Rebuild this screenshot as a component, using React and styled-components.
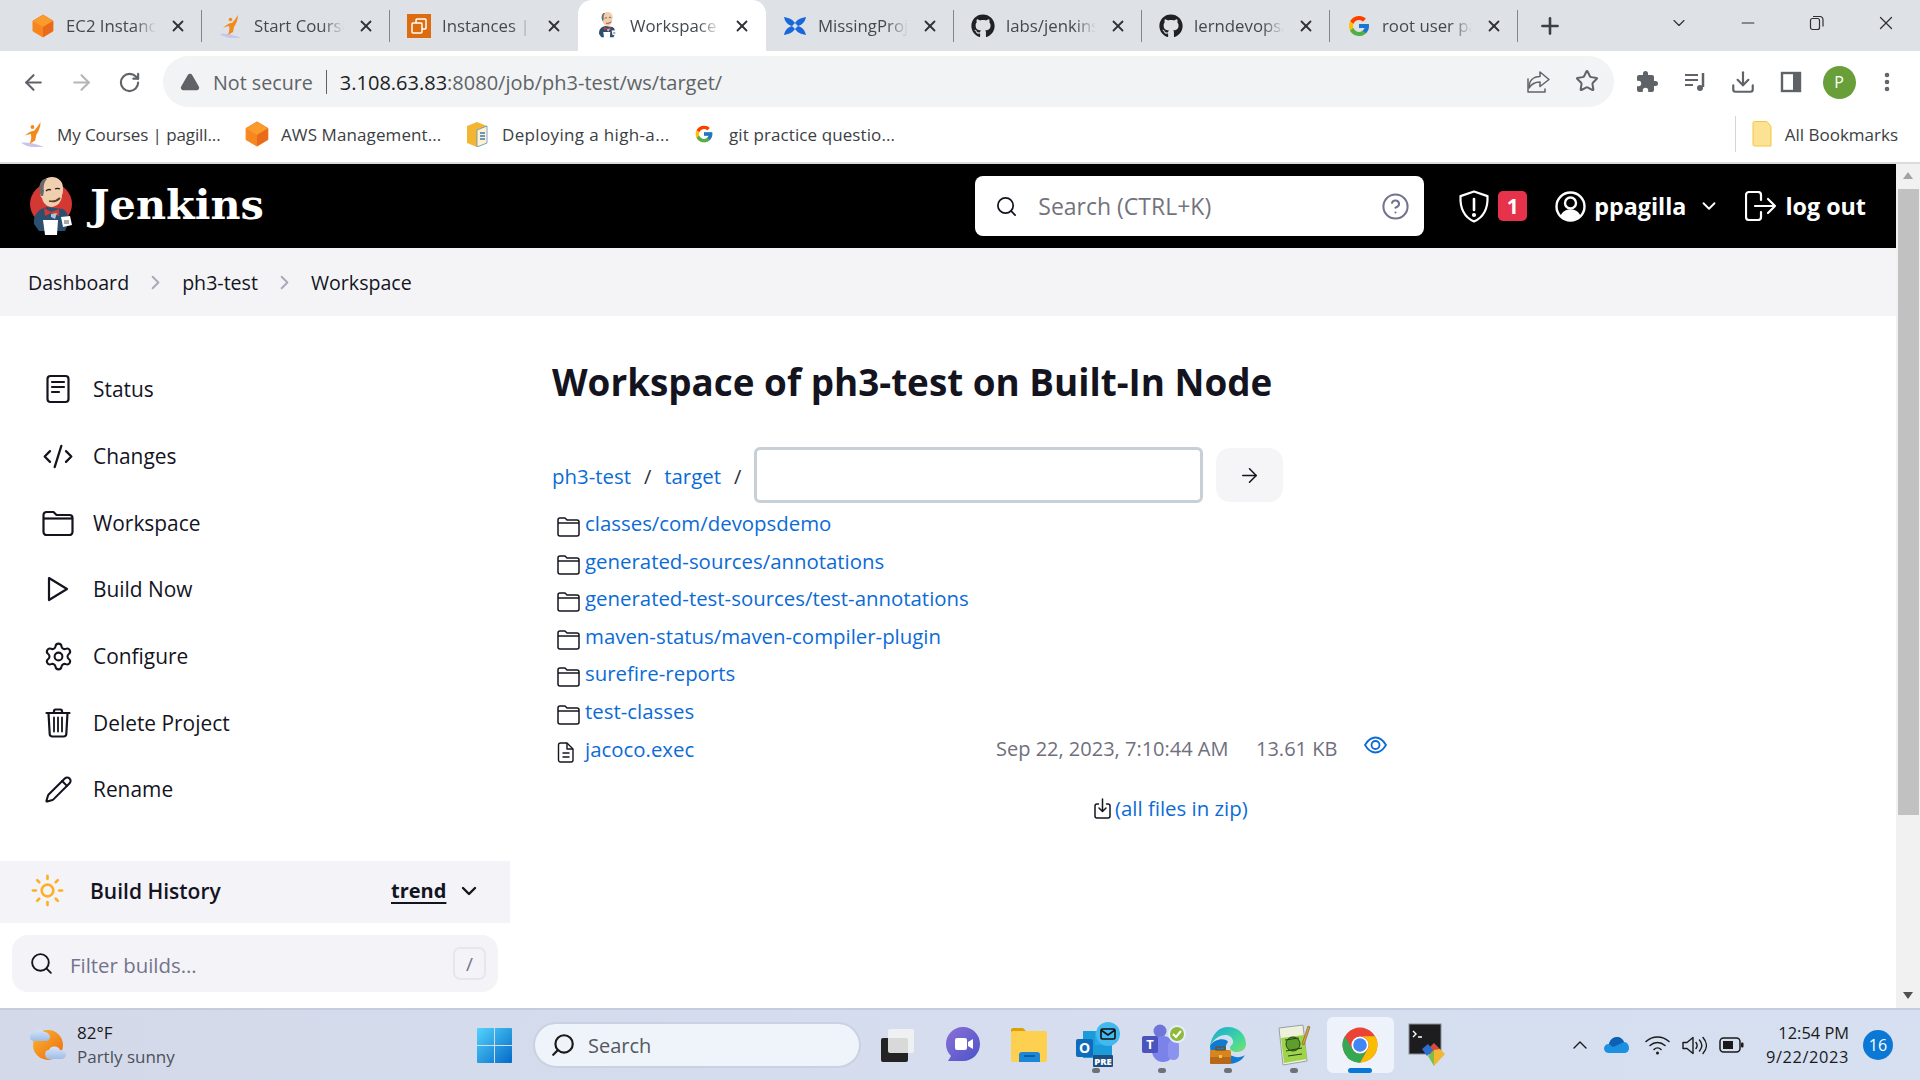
import React from 'react';
import styled, { createGlobalStyle } from 'styled-components';
import { FaGithub } from 'react-icons/fa';
import { FcGoogle } from 'react-icons/fc';
import {
  ArrowLeft, ArrowRight, RotateCw, Star, Download, MoreVertical, ChevronDown, ChevronUp, Plus, X, Minus,
  Search, ChevronRight, CodeXml, Settings, Pencil, Sun, CircleHelp, TriangleAlert
} from 'lucide-react';

const sans = '"Open Sans", "Noto Sans", sans-serif';

const Global = createGlobalStyle`
  html, body { margin: 0; padding: 0; width: 1920px; height: 1080px; overflow: hidden; background: #fff; }
  * { box-sizing: border-box; }
  body { font-family: ${sans}; }
`;

const Screen = styled.div`
  width: 1920px; height: 1080px; display: flex; flex-direction: column; overflow: hidden; background: #fff;
`;
const TabStrip = styled.div`
  height: 51px; flex: none; display: flex; background: #dee1e6; padding-left: 14px; align-items: stretch;
`;
const Tab = styled.div`
  width: 188px; flex: none; display: flex; align-items: center; padding-left: 17px; position: relative;
  background: ${p => (p.$active ? '#fff' : 'transparent')};
  border-radius: ${p => (p.$active ? '14px 14px 0 0' : '0')};
  &::after {
    content: ''; position: absolute; right: 0; top: 10px; height: 32px; width: 1px;
    background: ${p => (p.$sep ? '#80868b' : 'transparent')};
  }
`;
const Fav = styled.span`
  width: 24px; height: 24px; flex: none; display: flex; align-items: center; justify-content: center; color: #202124;
`;
const TabTitle = styled.span`
  width: 90px; margin-left: 11px; font-size: 16.8px; color: #45494e; white-space: nowrap; overflow: hidden;
  -webkit-mask-image: linear-gradient(90deg, #000 76%, transparent 100%);
  mask-image: linear-gradient(90deg, #000 76%, transparent 100%);
`;
const TabClose = styled.span`
  display: flex; margin-left: 13px; color: #303134;
`;
const NewTab = styled.span`
  display: flex; align-items: center; margin-left: 19px; color: #3c4043;
`;
const WinControls = styled.div`
  margin-left: auto; display: flex; align-items: flex-start; padding-top: 13px;
`;
const WinButton = styled.span`
  width: 69px; height: 20px; display: flex; align-items: center; justify-content: center; color: #303134;
`;

const Toolbar = styled.div`
  height: 62px; flex: none; display: flex; align-items: center; background: #fff; padding-left: 9px;
`;
const NavButton = styled.span`
  width: 48px; display: flex; justify-content: center; color: ${p => (p.$off ? '#b4b6b9' : '#5f6368')};
`;
const Omnibox = styled.div`
  margin-left: 10px; width: 1451px; height: 51px; border-radius: 26px; background: #f1f3f4; display: flex; align-items: center; padding-left: 17px;
  margin-top: -1px;
`;
const Insecure = styled.span`
  margin: 2px 0 0 13px; font-size: 19.7px; color: #5f6368;
`;
const UrlDivider = styled.span`
  width: 1px; height: 24px; background: #5f6368; margin: 0 13px 0 13px;
`;
const UrlHost = styled.span`
  margin-top: 2px; font-size: 20px; color: #202124;
`;
const UrlPath = styled.span`
  margin-top: 2px; font-size: 20px; color: #5f6368;
`;
const OmniEnd = styled.div`
  margin-left: auto; display: flex; padding-right: 15px; gap: 24px; color: #5f6368;
`;
const ToolIcons = styled.div`
  display: flex; margin-left: 9px; color: #5f6368;
`;
const ToolIcon = styled.span`
  width: 48px; display: flex; justify-content: center; align-items: center;
`;
const Avatar = styled.span`
  width: 33px; height: 33px; border-radius: 50%; background: #689f38; color: #fff; font-size: 16px; display: flex; align-items: center; justify-content: center;
`;

const Bookmarks = styled.div`
  height: 51px; flex: none; display: flex; align-items: center; background: #fff; border-bottom: 2px solid #dcdcdc; padding-bottom: 7px;
`;
const Bookmark = styled.div`
  display: flex; align-items: center; width: ${p => p.$w}px; flex: none; padding-left: ${p => p.$pl || 0}px;
  font-size: 17px; color: #3c4043; white-space: nowrap;
`;
const BookmarkLabel = styled.span`
  margin-left: ${p => p.$ml || 13}px;
  letter-spacing: ${p => p.$ls || 0}px;
`;
const AllBookmarks = styled.div`
  margin-left: auto; display: flex; align-items: center; padding-right: 22px; height: 36px; font-size: 17px; color: #3c4043;
  border-left: 1px solid #d5d5d5; padding-left: 16px;
`;

const Viewport = styled.div`
  flex: 1; min-height: 0; display: flex;
`;
const Page = styled.div`
  flex: 1; min-width: 0; display: flex; flex-direction: column;
`;
const ScrollBar = styled.div`
  width: 24px; flex: none; background: #f1f1f1; display: flex; flex-direction: column; align-items: center; padding-top: 8px; color: #a3a3a3;
`;
const ScrollArrow = styled.span`
  width: 0; height: 0; border-left: 5px solid transparent; border-right: 5px solid transparent;
  border-${p => (p.$down ? 'top' : 'bottom')}: 7px solid ${p => (p.$down ? '#505050' : '#a3a3a3')};
  ${p => (p.$down ? 'margin-top: 177px;' : '')}
`;
const ScrollThumb = styled.span`
  width: 21px; height: 626px; background: #c1c1c1; margin-top: 10px; flex: none;
`;

const Header = styled.header`
  height: 84px; flex: none; background: #000; display: flex; align-items: center; padding: 0 30px 0 29px; color: #fff;
`;
const Brand = styled.span`
  font-family: "DejaVu Serif", "Liberation Serif", serif; font-weight: 700; font-size: 41.4px; margin-left: 17px; line-height: 1; margin-top: -3px;
`;
const HeaderSearch = styled.div`
  margin-left: auto; width: 449px; height: 60px; background: #fff; border-radius: 8px; display: flex; align-items: center; padding: 0 14px 0 20px; color: #6d6d78; flex: none;
`;
const HeaderPlaceholder = styled.span`
  margin-left: 20px; font-size: 23px; color: #73737c; flex: 1;
`;
const Shield = styled.span`
  margin-left: 34px; display: flex;
`;
const Badge = styled.span`
  margin-left: 8px; width: 29px; height: 30px; border-radius: 5px; background: #e6324b; color: #fff; font-size: 21px; font-weight: 700; display: flex; align-items: center; justify-content: center;
`;
const UserIcon = styled.span`
  margin-left: 28px; display: flex;
`;
const HeaderLabel = styled.span`
  margin-left: ${p => p.$ml}px; font-size: 23.3px; font-weight: 700; color: #fff; white-space: nowrap;
`;
const HeaderIcon = styled.span`
  margin-left: ${p => p.$ml}px; display: flex;
`;

const Crumbs = styled.nav`
  height: 68px; flex: none; background: #f4f4f6; display: flex; align-items: center; padding-left: 28px; color: #14141f; font-size: 19.6px;
`;
const CrumbSep = styled.span`
  display: flex; margin: 0 15px 0 15px; color: #a8a8bb;
`;

const Body = styled.div`
  flex: 1; min-height: 0; display: flex;
`;
const Sidebar = styled.aside`
  width: 510px; flex: none; padding-top: 40px; display: flex; flex-direction: column;
`;
const Task = styled.div`
  height: 66.7px; flex: none; display: flex; align-items: center; padding-left: 42px; font-size: 20.9px; color: #14141f;
`;
const TaskIcon = styled.span`
  width: 32px; height: 32px; display: flex; align-items: center; justify-content: center; margin-right: 19px; color: #14141f;
`;
const History = styled.div`
  margin-top: 38.2px; height: 62px; flex: none; background: #f3f3f8; display: flex; align-items: center; padding: 0 0 3px 30px; color: #14141f;
`;
const HistoryTitle = styled.span`
  margin-left: 25px; font-size: 21px; font-weight: 600; width: 301px;
`;
const Trend = styled.span`
  font-size: 20px; font-weight: 700; text-decoration: underline; text-underline-offset: 4px;
`;
const TrendChevron = styled.span`
  display: flex; margin-left: 11px;
`;
const Filter = styled.div`
  margin: 12px 12px 0; height: 57px; flex: none; background: #f3f3f8; border-radius: 16px; display: flex; align-items: center; padding: 0 12px 0 17px; color: #14141f;
`;
const FilterText = styled.span`
  margin-left: 16px; flex: 1; font-size: 20.4px; font-weight: 500; color: #73738c; padding-top: 2px;
`;
const KeyCap = styled.span`
  width: 33px; height: 33px; border: 2px solid #e6e6ef; border-radius: 7px; display: flex; align-items: center; justify-content: center; color: #73738c; font-size: 19px;
`;

const Content = styled.main`
  flex: 1; min-width: 0; padding: 41px 0 0 42px;
`;
const Title = styled.h1`
  margin: 0; font-size: 36.85px; line-height: 50px; font-weight: 700; color: #14141f; white-space: nowrap;
`;
const PathRow = styled.div`
  margin-top: 40px; height: 56px; display: flex; align-items: center; font-size: 20px; color: #14141f;
`;
const Link = styled.a`
  color: #0b6bd6; font-size: 20.4px; white-space: nowrap; font-weight: 500;
`;
const PathLink = styled(Link)`
  margin-top: 2px;
`;
const Slash = styled.span`
  margin: 2px 13px 0; color: #30303a;
`;
const PathInput = styled.div`
  width: 449px; height: 56px; border: 3px solid #c7d0d6; border-radius: 6px; background: #fff; flex: none;
`;
const GoButton = styled.span`
  width: 67px; height: 54px; margin-left: 13px; border-radius: 14px; background: #f5f5f7; display: flex; align-items: center; justify-content: center; color: #14141f;
`;
const FileList = styled.div`
  margin-top: 1.5px; display: flex; flex-direction: column;
`;
const FileRow = styled.div`
  height: 37.55px; display: flex; align-items: center; white-space: nowrap;
`;
const FileIcon = styled.span`
  width: 33px; flex: none; display: flex; padding-left: 5px; margin-top: 8px; color: #14141f;
`;
const FileName = styled.span`
  width: 411px; flex: none; display: flex;
`;
const Meta = styled.span`
  width: ${p => p.$w}px; flex: none; font-size: 20px; color: #6f6f7e;
`;
const EyeBox = styled.span`
  display: flex; margin-top: -8px; color: #0b6bd6;
`;
const ZipRow = styled.div`
  margin: 21px 0 0 542px; height: 40px; display: flex; align-items: center; color: #14141f;
`;
const ZipIcon = styled.span`
  display: flex; margin-right: 4px;
`;

const Taskbar = styled.footer`
  height: 72px; flex: none; display: flex; align-items: center; position: relative;
  background: linear-gradient(90deg, #d3d9e9 0%, #d5ddee 50%, #d6e0f1 100%); border-top: 2px solid #c5cce0;
`;
const Weather = styled.div`
  width: 477px; flex: none; display: flex; align-items: center; padding-left: 29px;
`;
const WeatherText = styled.div`
  margin-left: 10px; display: flex; flex-direction: column; line-height: 24px;
`;
const WeatherTemp = styled.span`
  font-size: 17px; color: #1a1a1a;
`;
const WeatherDesc = styled.span`
  font-size: 17px; color: #4d5058;
`;
const WinLogo = styled.span`
  width: 35px; flex: none; display: flex;
`;
const TaskSearch = styled.div`
  margin-left: 21px; width: 328px; height: 46px; border-radius: 23px; background: #eff3fa; border: 2px solid #c9d2e4; display: flex; align-items: center; padding-left: 15px; font-size: 20px; color: #55585f; flex: none;
`;
const MirroredIcon = styled.span`
  display: flex; transform: scaleX(-1);
`;
const TaskSearchLabel = styled.span`
  margin-left: 12px;
`;
const Tiles = styled.div`
  margin-left: 3px; display: flex; align-items: center;
`;
const Tile = styled.span`
  width: 66.2px; height: 56px; display: flex; align-items: center; justify-content: center; position: relative; flex: none; border-radius: 6px;
  background: ${p => (p.$on ? '#eef2fa' : 'transparent')};
  &::after {
    content: ''; position: absolute; left: 50%; bottom: 0; height: 5px; border-radius: 3px; transform: translateX(-50%);
    width: ${p => (p.$on ? '24px' : p.$dot ? '8px' : '0')};
    background: ${p => (p.$on ? '#0a78d4' : '#6f7179')};
  }
`;
const Tray = styled.div`
  margin-left: auto; display: flex; align-items: center; color: #1a1a1a; padding-right: 27px;
`;
const TrayIcon = styled.span`
  display: flex; margin-left: ${p => p.$ml}px;
`;
const Clock = styled.div`
  margin-left: 22px; display: flex; flex-direction: column; align-items: flex-end; font-size: 16.4px; line-height: 24px; color: #1a1a1a;
`;
const ClockDate = styled.span`
  letter-spacing: .6px;
`;
const Count = styled.span`
  margin-left: 14px; width: 30px; height: 30px; border-radius: 50%; background: #0a78d4; color: #fff; font-size: 16px; display: flex; align-items: center; justify-content: center;
`;

const AwsCube = ({ s = 24 }) => (
  <svg width={s} height={s} viewBox="0 0 24 24">
    <path d="M12 1l10 6v10l-10 6L2 17V7z" fill="#f7861f" stroke="#f7861f" strokeWidth="1" strokeLinejoin="round" />
    <path d="M12 1l10 6-10 6L2 7z" fill="#fb9b2c" />
    <path d="M12 13l10-6v10l-10 6z" fill="#e9691d" />
  </svg>
);
const Runner = ({ s = 24 }) => (
  <svg width={s} height={s} viewBox="0 0 24 24">
    <path d="M1 20c6-1 14 1 21 4-8 1-16 0-21-4z" fill="#c6c6e8" />
    <path d="M19 1c0 5-2 9-4 12l-1 5-5 3c1-3 2-6 1-9-2 0-4 1-6 2 3-3 6-5 9-5 2-2 4-5 6-8z" fill="#f28a1e" />
    <circle cx="11.500" cy="5.500" r="1.800" fill="#f28a1e" />
  </svg>
);
const Ec2 = () => (
  <svg width="24" height="24" viewBox="0 0 24 24">
    <rect width="24" height="24" fill="#dd6b10" />
    <rect x="9" y="5" width="10" height="10" rx="1" fill="none" stroke="#fff" strokeWidth="1.500" />
    <rect x="5" y="9" width="10" height="10" rx="1" fill="#dd6b10" stroke="#fff" strokeWidth="1.500" />
  </svg>
);
const Atlassian = () => (
  <svg width="26" height="26" viewBox="0 0 24 24">
    <path d="M1 3c6 1 9 3 11 6 2-3 5-5 11-6-1 5-4 8-8 9 4 1 7 4 8 9-6-1-9-3-11-6-2 3-5 5-11 6 1-5 4-8 8-9-4-1-7-4-8-9z" fill="#1868db" />
    <path d="M12 9c-1 1-2 2-3 3 1 1 2 2 3 3 1-1 2-2 3-3-1-1-2-2-3-3z" fill="#dee1e6" />
  </svg>
);
const JenkinsLogo = ({ w = 44, h = 58, plain }) => (
  <svg width={w} height={h} viewBox="0 0 44 58">
    {!plain && <circle cx="22" cy="27" r="21" fill="#d33833" />}
    <path d="M5 47c-1-9 4-15 13-17l16 2c5 3 6 9 5 15l-3 7H10z" fill="#2b4f6e" />
    <path d="M12 13C11 5 16 0 23 0c6 0 11 4 11 11 0 3 0 5-1 7 0 7-5 12-11 12-5-1-8-4-9-9-2-1-2-6-1-8z" fill="#f0cfae" />
    <path d="M12 19c-3-7-2-14 3-17 1 0 2 0 3 0-3 3-4 8-3 12l-1 5z" fill="#6b6a68" />
    <path d="M17 14c2-2 3-2 5-1M26 12c2-1 3-1 5 0" stroke="#231f20" strokeWidth="1.300" fill="none" />
    <path d="M20 24c4 1 8 0 11-3" stroke="#5d3b26" strokeWidth="1.800" fill="none" />
    <path d="M15 31l7 4 8-3v7l-8-3-6 3z" fill="#d33833" />
    <path d="M22 37l6-1-2 6-4-2z" fill="#a9c5dc" />
    <path d="M14 43h15l-1 15H16z" fill="#fff" />
    <path d="M32 40l9-1 2 9-9 2z" fill="#fff" />
    <path d="M35 44h5M35 46h5" stroke="#555" />
  </svg>
);
const ShieldIcon = () => (
  <svg width="32" height="33" viewBox="0 0 32 33" fill="none" stroke="#fff" strokeWidth="2.200" strokeLinejoin="round">
    <path d="M16 1.500l13.500 4.600c.5 11.500-2.500 20.500-13.500 25.400C5 26.600 2 17.600 2.500 6.100z" />
    <path d="M16 9v11" strokeLinecap="round" strokeWidth="2.600" />
    <circle cx="16" cy="25" r="1" fill="#fff" />
  </svg>
);
const UserCircle = () => (
  <svg width="31" height="33" viewBox="0 0 31 33" fill="none">
    <circle cx="15.500" cy="16.500" r="14" stroke="#fff" strokeWidth="2.400" />
    <circle cx="15.500" cy="13" r="5.500" stroke="#fff" strokeWidth="2.400" />
    <path d="M5.500 26c2-5 5.500-6.500 10-6.500s8 1.500 10 6.500c-3 3-6 4.500-10 4.500S8.500 29 5.500 26z" fill="#fff" />
  </svg>
);
const LogoutIcon = () => (
  <svg width="32" height="30" viewBox="0 0 32 30" fill="none" stroke="#fff" strokeWidth="2.200" strokeLinecap="round" strokeLinejoin="round">
    <path d="M16 9V4a3 3 0 0 0-3-3H4a3 3 0 0 0-3 3v22a3 3 0 0 0 3 3h9a3 3 0 0 0 3-3v-5" />
    <path d="M10 15h20M23 8l7 7-7 7" />
  </svg>
);
const StatusIcon = () => (
  <svg width="24" height="30" viewBox="0 0 24 30" fill="none" stroke="currentColor" strokeWidth="2.200" strokeLinecap="round">
    <rect x="1.500" y="2" width="21" height="26" rx="3" />
    <path d="M6 8h12M6 13h12M6 18h7" />
  </svg>
);
const FolderSide = () => (
  <svg width="32" height="26" viewBox="0 0 32 26" fill="none" stroke="currentColor" strokeWidth="2.200" strokeLinejoin="round">
    <path d="M1.500 5a3 3 0 0 1 3-3h7l3 3h13a3 3 0 0 1 3 3v14a3 3 0 0 1-3 3h-23a3 3 0 0 1-3-3z" />
    <path d="M1.500 8.500h29" />
  </svg>
);
const PlayIcon = () => (
  <svg width="22" height="26" viewBox="0 0 22 26" fill="none" stroke="currentColor" strokeWidth="2.200" strokeLinejoin="round">
    <path d="M2 2l18 11L2 24z" />
  </svg>
);
const TrashIcon = () => (
  <svg width="26" height="30" viewBox="0 0 26 30" fill="none" stroke="currentColor" strokeWidth="2.200" strokeLinecap="round" strokeLinejoin="round">
    <path d="M1.500 5h23M9 5V3a1.500 1.500 0 0 1 1.500-1.500h5A1.500 1.500 0 0 1 17 3v2" />
    <path d="M3.500 5l1.200 21a2.500 2.500 0 0 0 2.500 2.500h11.600a2.500 2.500 0 0 0 2.500-2.500L22.500 5" />
    <path d="M9 9.500v14M13 9.500v14M17 9.500v14" strokeWidth="1.800" />
  </svg>
);
const FolderSmall = () => (
  <svg width="23" height="20" viewBox="0 0 23 20" fill="none" stroke="currentColor" strokeWidth="1.500" strokeLinejoin="round">
    <path d="M1 3a2 2 0 0 1 2-2h5l2 2h10a2 2 0 0 1 2 2v12a2 2 0 0 1-2 2H3a2 2 0 0 1-2-2z" />
    <path d="M1 6h21" />
  </svg>
);
const FileSmall = () => (
  <svg width="18" height="21" viewBox="0 0 18 21" fill="none" stroke="currentColor" strokeWidth="1.400" strokeLinejoin="round">
    <path d="M3.500 1H10l6 6v11a2 2 0 0 1-2 2H3.500a2 2 0 0 1-2-2V3a2 2 0 0 1 2-2z" />
    <path d="M10 1v6h6M5.500 11h7M5.500 15h7" />
  </svg>
);
const ZipDown = () => (
  <svg width="17" height="21" viewBox="0 0 17 21" fill="none" stroke="currentColor" strokeWidth="1.500" strokeLinejoin="round" strokeLinecap="round">
    <path d="M4.500 6H3a2 2 0 0 0-2 2v10a2 2 0 0 0 2 2h11a2 2 0 0 0 2-2V8a2 2 0 0 0-2-2h-1.500" />
    <path d="M8.500 1v12M5 10l3.500 3.500L12 10" />
  </svg>
);
const EyeIcon = () => (
  <svg width="23" height="18" viewBox="0 0 23 18" fill="none" stroke="currentColor" strokeWidth="1.800">
    <path d="M1 9c3-5 6.500-7.500 10.500-7.500S19 4 22 9c-3 5-6.500 7.500-10.500 7.500S4 14 1 9z" />
    <circle cx="11.500" cy="9" r="4" />
  </svg>
);
const ShareIcon = () => (
  <svg width="25" height="25" viewBox="0 0 25 25" fill="none" stroke="currentColor" strokeWidth="1.500" strokeLinejoin="round" strokeLinecap="round">
    <path d="M14 3l9 7.500-9 7V13c-5 0-8.500 2-11 6 0-7 4-11.500 11-11.500z" />
    <path d="M2 10v13h17v-3" />
  </svg>
);
const WinIcon = ({ s = 35 }) => (
  <svg width={s} height={s} viewBox="0 0 35 35">
    <defs>
      <linearGradient id="wg" x1="0" y1="0" x2="1" y2="1">
        <stop offset="0" stopColor="#52d4fb" />
        <stop offset="1" stopColor="#0569c8" />
      </linearGradient>
    </defs>
    <path d="M0 1a1 1 0 0 1 1-1h16v17H0zM18 0h16a1 1 0 0 1 1 1v16H18zM0 18h17v17H1a1 1 0 0 1-1-1zM18 18h17v16a1 1 0 0 1-1 1H18z" fill="url(#wg)" />
  </svg>
);
const TaskView = () => (
  <svg width="36" height="36" viewBox="0 0 36 36">
    <rect x="2" y="11" width="27" height="24" rx="2" fill="#232323" />
    <rect x="9" y="2" width="26" height="24" rx="2" fill="#f2f2f2" fillOpacity=".88" />
  </svg>
);
const MeetChat = () => (
  <svg width="36" height="38" viewBox="0 0 36 38">
    <defs>
      <linearGradient id="mc" x1="0" y1="0" x2="1" y2="1">
        <stop offset="0" stopColor="#8c6fd8" />
        <stop offset="1" stopColor="#4a54c8" />
      </linearGradient>
    </defs>
    <path d="M18 1c10 0 17 8 17 17s-7 17-17 17H3l3-5C3 27 1 23 1 18 1 9 8 1 18 1z" fill="url(#mc)" />
    <rect x="10" y="12" width="12" height="12" rx="2" fill="#fff" />
    <path d="M23 16l5-3v10l-5-3z" fill="#fff" />
  </svg>
);
const FolderApp = () => (
  <svg width="38" height="36" viewBox="0 0 38 36">
    <path d="M1 3a2 2 0 0 1 2-2h10l4 4h-16z" fill="#e0a100" />
    <rect x="1" y="4" width="36" height="31" rx="2" fill="#fdd04f" />
    <path d="M9 35v-7a3 3 0 0 1 3-3h15a3 3 0 0 1 3 3v7z" fill="#1b87d6" />
    <rect x="14" y="28" width="11" height="2" fill="#0f5da3" />
  </svg>
);
const OutlookApp = () => (
  <svg width="49" height="46" viewBox="0 0 49 46">
    <path d="M12 9h29v27H12z" fill="#1b9bd8" />
    <path d="M24 9h17v14H24z" fill="#28a8ea" />
    <rect x="5" y="17" width="17" height="18" rx="2" fill="#0f6cbd" />
    <text x="13.500" y="31" fontSize="14" fontWeight="700" textAnchor="middle" fill="#fff" fontFamily="Open Sans">O</text>
    <rect x="22" y="33" width="20" height="12" rx="1" fill="#1f4f80" />
    <text x="32" y="43" fontSize="9.500" fontWeight="800" textAnchor="middle" fill="#fff" fontFamily="Open Sans">PRE</text>
    <circle cx="37" cy="12" r="12" fill="#43b9ef" />
    <rect x="30" y="7" width="14" height="10" rx="1.500" fill="none" stroke="#111" strokeWidth="1.600" />
    <path d="M30 8l7 5 7-5" fill="none" stroke="#111" strokeWidth="1.600" />
  </svg>
);
const TeamsApp = () => (
  <svg width="48" height="46" viewBox="0 0 48 46">
    <circle cx="22" cy="9" r="6.500" fill="#6f76d8" />
    <rect x="14" y="14" width="22" height="26" rx="11" fill="#7b83eb" />
    <rect x="30" y="18" width="11" height="20" rx="5.500" fill="#8c93ee" />
    <rect x="4" y="14" width="16" height="17" rx="2" fill="#4b53bc" />
    <text x="12" y="27" fontSize="13" fontWeight="700" textAnchor="middle" fill="#fff" fontFamily="Open Sans">T</text>
    <circle cx="39" cy="12" r="8" fill="#8fb93b" stroke="#e9eef8" strokeWidth="2" />
    <path d="M35 12l3 3 5-6" fill="none" stroke="#fff" strokeWidth="2" />
  </svg>
);
const EdgeApp = () => (
  <svg width="38" height="38" viewBox="0 0 38 38">
    <defs>
      <linearGradient id="eg" x1="0" y1="0" x2="1" y2="1">
        <stop offset="0" stopColor="#1aa6d8" />
        <stop offset=".6" stopColor="#3ed6a0" />
        <stop offset="1" stopColor="#78e06a" />
      </linearGradient>
    </defs>
    <path d="M19 1c11 0 18 8 18 17 0 5-4 8-9 8-4 0-7-2-7-4 0-3 4-3 3-7-1-5-5-6-8-6-6 0-11 4-15 11C3 8 10 1 19 1z" fill="url(#eg)" />
    <path d="M1 20c3-7 16-9 18-4-3 3-3 9 1 12 5 4 12 4 16 1-3 6-10 9-17 9C9 38 1 31 1 20z" fill="#0f7bd3" />
    <rect x="1" y="24" width="21" height="14" rx="1.500" fill="#d8841f" />
    <rect x="1" y="31" width="21" height="7" rx="1.500" fill="#b8681a" />
    <rect x="7" y="21" width="9" height="3" fill="none" stroke="#7a4a14" strokeWidth="1.200" />
    <rect x="10" y="29" width="3" height="3" fill="#f5c542" />
  </svg>
);
const NotepadApp = () => (
  <svg width="36" height="42" viewBox="0 0 36 42">
    <path d="M3 4l24-3 4 36-24 4z" fill="#eef2dc" stroke="#9aa0a6" />
    <path d="M5 14l23-3 3 24-23 4z" fill="#9fd34a" />
    <circle cx="17" cy="20" r="7" fill="#5d9e2e" stroke="#24421a" />
    <path d="M10 27l16-3M9 16l14-2M12 32l14-2" stroke="#24421a" />
    <path d="M34 3l-6 18-2-1 6-18z" fill="#d6a13c" stroke="#7c5a1a" strokeWidth=".6" />
  </svg>
);
const ChromeLogo = ({ s = 38 }) => (
  <svg width={s} height={s} viewBox="0 0 24 24">
    <circle cx="12" cy="12" r="11" fill="#ea4335" />
    <path d="M21.530 6.500H12a5.500 5.500 0 0 1 4.770 8.250L12 23a11 11 0 0 0 9.530-16.500z" fill="#fbbc04" />
    <path d="M2.470 6.500l4.760 8.250a5.500 5.500 0 0 0 4.770 2.750L12 23A11 11 0 0 1 2.470 6.500z" fill="#34a853" />
    <path d="M7.230 14.750a5.500 5.500 0 0 0 9.540 0L12 23c-3 0-6-1-8-3z" fill="#34a853" />
    <circle cx="12" cy="12" r="5.400" fill="#fff" />
    <circle cx="12" cy="12" r="4.300" fill="#4285f4" />
  </svg>
);
const TermApp = () => (
  <svg width="38" height="44" viewBox="0 0 38 44">
    <rect x="1" y="1" width="32" height="30" fill="#1d1d1f" stroke="#8b8f96" />
    <path d="M5 8l3 3-3 3M10 14h4" stroke="#fff" strokeWidth="1.400" fill="none" />
    <path d="M26 20l6 6-7 7-6-6z" fill="#d94a3d" />
    <path d="M14 26l6-5 5 6-6 6z" fill="#2c6fd1" />
    <path d="M20 33l6-6 3 3-3 13z" fill="#7cc04b" />
    <path d="M26 27l6-1 5 5-11 12z" fill="#f2b632" />
  </svg>
);
const WeatherIcon = () => (
  <svg width="38" height="36" viewBox="0 0 38 36">
    <defs>
      <linearGradient id="wsun" x1="0" y1="0" x2="1" y2="1">
        <stop offset="0" stopColor="#fbb62f" />
        <stop offset="1" stopColor="#ec6a12" />
      </linearGradient>
      <linearGradient id="wcl" x1="0" y1="0" x2="0" y2="1">
        <stop offset="0" stopColor="#d6e4f7" />
        <stop offset="1" stopColor="#9ebde8" />
      </linearGradient>
    </defs>
    <circle cx="19" cy="18" r="15" fill="url(#wsun)" />
    <path d="M1 10c0-3 2-4 4-4 1-4 8-5 10-1 3 0 6 2 6 5 0 2-2 4-4 4H5c-2 0-4-1-4-4z" fill="url(#wcl)" />
    <path d="M16 27c0-3 2-4 4-4 2-5 10-4 11 0 3 0 6 2 6 5 0 2-2 4-5 4H20c-2 0-4-2-4-5z" fill="url(#wcl)" />
  </svg>
);
const Cloud = () => (
  <svg width="25" height="17" viewBox="0 0 25 17">
    <path d="M5 16C2 16 0 14 0 11.500S2 7 5 7c1-4 4-7 8-7 3 0 6 2 7 5 3 0 5 3 5 6s-2 5-5 5z" fill="#1b8fe0" />
    <path d="M5 7c1-4 4-7 8-7 3 0 6 2 7 5L9 10z" fill="#0f5fb3" />
  </svg>
);
const Wifi = () => (
  <svg width="25" height="20" viewBox="0 0 25 20" fill="none" stroke="#1a1a1a" strokeWidth="1.500" strokeLinecap="round">
    <path d="M1 6.500c6.500-6 16.500-6 23 0M5 10.500c4.500-4 10.500-4 15 0M9 14.500c2-2 5-2 7 0" />
    <circle cx="12.500" cy="18" r="1.500" fill="#1a1a1a" stroke="none" />
  </svg>
);
const Volume = () => (
  <svg width="25" height="21" viewBox="0 0 25 21" fill="none" stroke="#1a1a1a" strokeWidth="1.400" strokeLinejoin="round" strokeLinecap="round">
    <path d="M1 7.500v6h4l6 5V2.500l-6 5z" />
    <path d="M14 7.500c1.500 2 1.500 4 0 6M17.500 5c3 3.500 3 7.500 0 11M21 2.500c4.500 5 4.500 11 0 16" />
  </svg>
);
const Battery = () => (
  <svg width="25" height="16" viewBox="0 0 25 16">
    <rect x="1" y="1" width="20" height="14" rx="3.500" fill="none" stroke="#1a1a1a" strokeWidth="1.500" />
    <rect x="4" y="4" width="10" height="8" fill="#1a1a1a" />
    <rect x="22" y="5.500" width="2.500" height="5" rx="1" fill="#1a1a1a" />
  </svg>
);
const Extension = () => (
  <svg width="24" height="24" viewBox="0 0 24 24" fill="currentColor">
    <path d="M20.500 11H19V7a2 2 0 0 0-2-2h-4V3.500a2.500 2.500 0 0 0-5 0V5H4a2 2 0 0 0-2 2v3.800h1.500a2.700 2.700 0 0 1 0 5.400H2V20a2 2 0 0 0 2 2h3.800v-1.500a2.700 2.700 0 0 1 5.400 0V22H17a2 2 0 0 0 2-2v-4h1.500a2.500 2.500 0 0 0 0-5z" />
  </svg>
);
const MediaQueue = () => (
  <svg width="24" height="24" viewBox="0 0 24 24" fill="none" stroke="currentColor" strokeWidth="2">
    <path d="M2 5h13M2 10h13M2 15h8" />
    <path d="M20 3v14" strokeWidth="2.500" />
    <circle cx="17" cy="18" r="3" fill="currentColor" stroke="none" />
  </svg>
);
const SidePanel = () => (
  <svg width="24" height="24" viewBox="0 0 24 24" fill="none" stroke="currentColor">
    <rect x="3" y="3" width="18" height="18" strokeWidth="2.400" />
    <rect x="14" y="3" width="7" height="18" fill="currentColor" stroke="none" />
  </svg>
);
const FolderYellow = () => (
  <svg width="20" height="26" viewBox="0 0 20 26">
    <path d="M1 2a1.500 1.500 0 0 1 1.500-1.500H15l4 5V25H2.500A1.500 1.500 0 0 1 1 23.500z" fill="#fde293" stroke="#f4c542" />
  </svg>
);
const Sheets = () => (
  <svg width="22" height="26" viewBox="0 0 22 26">
    <path d="M1 5l10-4 10 4v17l-10 4-10-4z" fill="#f2b632" />
    <path d="M11 9l10-4v17l-10 4z" fill="#fdf3d0" stroke="#5a8fc7" strokeWidth=".8" />
    <path d="M14 12h5M14 15h5M14 18h5" stroke="#3c78b5" strokeWidth="1.300" />
  </svg>
);

const tabs = [
  { icon: <AwsCube />, title: 'EC2 Instances' },
  { icon: <Runner />, title: 'Start Course' },
  { icon: <Ec2 />, title: 'Instances | EC2' },
  { icon: <JenkinsLogo w={22} h={27} plain />, title: 'Workspace of ph3', active: true },
  { icon: <Atlassian />, title: 'MissingProjects' },
  { icon: <FaGithub size={24} />, title: 'labs/jenkins-' },
  { icon: <FaGithub size={24} />, title: 'lerndevops/lab' },
  { icon: <FcGoogle size={24} />, title: 'root user pass' }
];
const tasks = [
  { icon: <StatusIcon />, label: 'Status' },
  { icon: <CodeXml size={33} strokeWidth={1.7} />, label: 'Changes' },
  { icon: <FolderSide />, label: 'Workspace' },
  { icon: <PlayIcon />, label: 'Build Now' },
  { icon: <Settings size={31} strokeWidth={1.6} />, label: 'Configure' },
  { icon: <TrashIcon />, label: 'Delete Project' },
  { icon: <Pencil size={29} strokeWidth={1.7} />, label: 'Rename' }
];
const folders = [
  'classes/com/devopsdemo',
  'generated-sources/annotations',
  'generated-test-sources/test-annotations',
  'maven-status/maven-compiler-plugin',
  'surefire-reports',
  'test-classes'
];

export default function App() {
  return (
    <Screen>
      <Global />
      <TabStrip>
        {tabs.map((t, i) => (
          <Tab key={t.title} $active={t.active} $sep={i !== 2 && i !== 3}>
            <Fav>{t.icon}</Fav>
            <TabTitle>{t.title}</TabTitle>
            <TabClose><X size={18} strokeWidth={2.4} /></TabClose>
          </Tab>
        ))}
        <NewTab><Plus size={26} strokeWidth={2.4} /></NewTab>
        <WinControls>
          <WinButton><ChevronDown size={20} strokeWidth={1.4} /></WinButton>
          <WinButton><Minus size={20} strokeWidth={1.4} /></WinButton>
          <WinButton>
            <svg width="16" height="16" viewBox="0 0 16 16" fill="none" stroke="currentColor" strokeWidth="1.200">
              <rect x="1.500" y="3.500" width="9" height="11" rx="2" />
              <path d="M4 1.500h7a3 3 0 0 1 3 3v7" />
            </svg>
          </WinButton>
          <WinButton><X size={22} strokeWidth={1.4} /></WinButton>
        </WinControls>
      </TabStrip>

      <Toolbar>
        <NavButton><ArrowLeft size={25} strokeWidth={2} /></NavButton>
        <NavButton $off><ArrowRight size={25} strokeWidth={2} /></NavButton>
        <NavButton><RotateCw size={23} strokeWidth={2.2} /></NavButton>
        <Omnibox>
          <TriangleAlert size={20} fill="#5f6368" color="#5f6368" />
          <Insecure>Not secure</Insecure>
          <UrlDivider />
          <UrlHost>3.108.63.83</UrlHost>
          <UrlPath>:8080/job/ph3-test/ws/target/</UrlPath>
          <OmniEnd>
            <ShareIcon />
            <Star size={24} strokeWidth={2} />
          </OmniEnd>
        </Omnibox>
        <ToolIcons>
          <ToolIcon><Extension /></ToolIcon>
          <ToolIcon><MediaQueue /></ToolIcon>
          <ToolIcon><Download size={26} strokeWidth={2} /></ToolIcon>
          <ToolIcon><SidePanel /></ToolIcon>
          <ToolIcon><Avatar>P</Avatar></ToolIcon>
          <ToolIcon><MoreVertical size={24} strokeWidth={2.6} /></ToolIcon>
        </ToolIcons>
      </Toolbar>

      <Bookmarks>
        <Bookmark $w={244} $pl={20}><Runner s={26} /><BookmarkLabel $ml={11} $ls={-0.1}>My Courses | pagill...</BookmarkLabel></Bookmark>
        <Bookmark $w={222}><AwsCube s={26} /><BookmarkLabel $ml={11} $ls={0.1}>AWS Management...</BookmarkLabel></Bookmark>
        <Bookmark $w={228}><Sheets /><BookmarkLabel $ml={14} $ls={0.35}>Deploying a high-a...</BookmarkLabel></Bookmark>
        <Bookmark $w={260}><FcGoogle size={20} /><BookmarkLabel $ml={15} $ls={0.1}>git practice questio...</BookmarkLabel></Bookmark>
        <AllBookmarks><FolderYellow /><BookmarkLabel $ml={13}>All Bookmarks</BookmarkLabel></AllBookmarks>
      </Bookmarks>

      <Viewport>
        <Page>
          <Header>
            <JenkinsLogo />
            <Brand>Jenkins</Brand>
            <HeaderSearch>
              <Search size={23} strokeWidth={1.8} color="#14141f" />
              <HeaderPlaceholder>Search (CTRL+K)</HeaderPlaceholder>
              <CircleHelp size={29} strokeWidth={1.7} color="#73738c" />
            </HeaderSearch>
            <Shield><ShieldIcon /></Shield>
            <Badge>1</Badge>
            <UserIcon><UserCircle /></UserIcon>
            <HeaderLabel $ml={8}>ppagilla</HeaderLabel>
            <HeaderIcon $ml={12}><ChevronDown size={22} strokeWidth={2} /></HeaderIcon>
            <HeaderIcon $ml={25}><LogoutIcon /></HeaderIcon>
            <HeaderLabel $ml={8}>log out</HeaderLabel>
          </Header>
          <Crumbs>
            <span>Dashboard</span>
            <CrumbSep><ChevronRight size={23} strokeWidth={2} /></CrumbSep>
            <span>ph3-test</span>
            <CrumbSep><ChevronRight size={23} strokeWidth={2} /></CrumbSep>
            <span>Workspace</span>
          </Crumbs>
          <Body>
            <Sidebar>
              {tasks.map(t => (
                <Task key={t.label}>
                  <TaskIcon>{t.icon}</TaskIcon>
                  {t.label}
                </Task>
              ))}
              <History>
                <Sun size={35} strokeWidth={1.8} color="#fdb022" />
                <HistoryTitle>Build History</HistoryTitle>
                <Trend>trend</Trend>
                <TrendChevron><ChevronDown size={24} strokeWidth={2.4} /></TrendChevron>
              </History>
              <Filter>
                <Search size={25} strokeWidth={1.8} />
                <FilterText>Filter builds...</FilterText>
                <KeyCap>/</KeyCap>
              </Filter>
            </Sidebar>
            <Content>
              <Title>Workspace of ph3-test on Built-In Node</Title>
              <PathRow>
                <PathLink>ph3-test</PathLink>
                <Slash>/</Slash>
                <PathLink>target</PathLink>
                <Slash>/</Slash>
                <PathInput />
                <GoButton><ArrowRight size={23} strokeWidth={1.6} /></GoButton>
              </PathRow>
              <FileList>
                {folders.map(f => (
                  <FileRow key={f}>
                    <FileIcon><FolderSmall /></FileIcon>
                    <Link>{f}</Link>
                  </FileRow>
                ))}
                <FileRow>
                  <FileIcon><FileSmall /></FileIcon>
                  <FileName><Link>jacoco.exec</Link></FileName>
                  <Meta $w={260}>Sep 22, 2023, 7:10:44 AM</Meta>
                  <Meta $w={108}>13.61 KB</Meta>
                  <EyeBox><EyeIcon /></EyeBox>
                </FileRow>
              </FileList>
              <ZipRow>
                <ZipIcon><ZipDown /></ZipIcon>
                <Link>(all files in zip)</Link>
              </ZipRow>
            </Content>
          </Body>
        </Page>
        <ScrollBar>
          <ScrollArrow />
          <ScrollThumb />
          <ScrollArrow $down />
        </ScrollBar>
      </Viewport>

      <Taskbar>
        <Weather>
          <WeatherIcon />
          <WeatherText>
            <WeatherTemp>82°F</WeatherTemp>
            <WeatherDesc>Partly sunny</WeatherDesc>
          </WeatherText>
        </Weather>
        <WinLogo><WinIcon /></WinLogo>
        <TaskSearch>
          <MirroredIcon><Search size={26} strokeWidth={2} color="#1a1a1a" /></MirroredIcon>
          <TaskSearchLabel>Search</TaskSearchLabel>
        </TaskSearch>
        <Tiles>
          <Tile><TaskView /></Tile>
          <Tile><MeetChat /></Tile>
          <Tile><FolderApp /></Tile>
          <Tile $dot><OutlookApp /></Tile>
          <Tile $dot><TeamsApp /></Tile>
          <Tile $dot><EdgeApp /></Tile>
          <Tile $dot><NotepadApp /></Tile>
          <Tile $on><ChromeLogo /></Tile>
          <Tile><TermApp /></Tile>
        </Tiles>
        <Tray>
          <ChevronUp size={24} strokeWidth={1.4} />
          <TrayIcon $ml={12}><Cloud /></TrayIcon>
          <TrayIcon $ml={16}><Wifi /></TrayIcon>
          <TrayIcon $ml={12}><Volume /></TrayIcon>
          <TrayIcon $ml={12}><Battery /></TrayIcon>
          <Clock>
            <span>12:54 PM</span>
            <ClockDate>9/22/2023</ClockDate>
          </Clock>
          <Count>16</Count>
        </Tray>
      </Taskbar>
    </Screen>
  );
}
